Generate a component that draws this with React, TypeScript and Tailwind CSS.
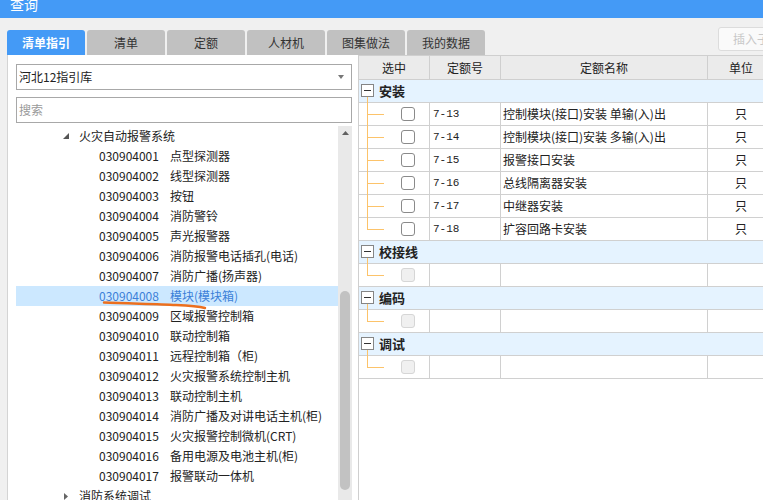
const tabs = ["清单指引", "清单", "定额", "人材机", "图集做法", "我的数据"];

const treeItems: [string, string][] = [
  ["030904001", "点型探测器"],
  ["030904002", "线型探测器"],
  ["030904003", "按钮"],
  ["030904004", "消防警铃"],
  ["030904005", "声光报警器"],
  ["030904006", "消防报警电话插孔(电话)"],
  ["030904007", "消防广播(扬声器)"],
  ["030904008", "模块(模块箱)"],
  ["030904009", "区域报警控制箱"],
  ["030904010", "联动控制箱"],
  ["030904011", "远程控制箱（柜)"],
  ["030904012", "火灾报警系统控制主机"],
  ["030904013", "联动控制主机"],
  ["030904014", "消防广播及对讲电话主机(柜)"],
  ["030904015", "火灾报警控制微机(CRT)"],
  ["030904016", "备用电源及电池主机(柜)"],
  ["030904017", "报警联动一体机"],
];

type Row = { code: string; name: string; unit: string };
const groups: { title: string; rows: (Row | null)[] }[] = [
  {
    title: "安装",
    rows: [
      { code: "7-13", name: "控制模块(接口)安装 单输(入)出", unit: "只" },
      { code: "7-14", name: "控制模块(接口)安装 多输(入)出", unit: "只" },
      { code: "7-15", name: "报警接口安装", unit: "只" },
      { code: "7-16", name: "总线隔离器安装", unit: "只" },
      { code: "7-17", name: "中继器安装", unit: "只" },
      { code: "7-18", name: "扩容回路卡安装", unit: "只" },
    ],
  },
  { title: "校接线", rows: [null] },
  { title: "编码", rows: [null] },
  { title: "调试", rows: [null] },
];

function GroupRow({ title }: { title: string }) {
  return (
    <div className="relative h-[23px] flex items-center bg-[#e5f3ff] border-b border-[#d0d0d0]">
      <div className="absolute left-[2px] top-[4px] w-[13px] h-[13px] border border-[#858585] bg-white flex items-center justify-center">
        <div className="w-[7px] h-[1px] bg-[#333]" />
      </div>
      <div className="absolute left-[8px] top-[17px] w-[1px] h-[6px] bg-[#fcc36a]" />
      <span className="ml-[20px] text-[13px] font-bold text-[#222]">{title}</span>
    </div>
  );
}

function DataRow({ row, last }: { row: Row | null; last: boolean }) {
  return (
    <div className="flex h-[23px] border-b border-[#d0d0d0]">
      <div className="relative w-[71px] shrink-0 border-r border-[#d0d0d0]">
        <div className={`absolute left-[8px] top-0 w-[1px] bg-[#fcc36a] ${last ? "h-[11px]" : "h-[23px]"}`} />
        <div className="absolute left-[8px] top-[11px] w-[17px] h-[1px] bg-[#fcc36a]" />
        <div
          className={`absolute left-[42px] top-[4px] w-[14px] h-[14px] rounded-[3px] border ${
            row ? "border-[#8a8a8a] bg-white" : "border-[#d6d6d6] bg-[#f0f0f0]"
          }`}
        />
      </div>
      <div className="w-[71px] shrink-0 border-r border-[#d0d0d0] pl-[3px] flex items-center text-[11px] font-['Liberation_Mono',monospace]">
        {row?.code}
      </div>
      <div className="w-[207px] shrink-0 border-r border-[#d0d0d0] pl-[2px] flex items-center">
        {row?.name}
      </div>
      <div className="w-[66px] shrink-0 flex items-center justify-center">{row?.unit}</div>
    </div>
  );
}

export default function App() {
  return (
    <div className="w-[763px] h-[500px] overflow-hidden bg-[#f0f0f0] font-['Noto_Sans_CJK_SC','Noto_Sans',sans-serif] text-[12px] text-[#222]">
      <div className="h-[18px] bg-[#449af6] overflow-hidden">
        <div className="pl-[10px] -mt-[6px] text-white text-[14px] leading-[20px]">查询</div>
      </div>

      <div className="h-[37px] flex items-end pl-[7px] overflow-hidden">
        {tabs.map((t, i) => (
          <div
            key={t}
            className={`w-[78px] h-[25px] mr-[2px] shrink-0 rounded-t-[3px] flex items-center justify-center ${
              i === 0 ? "bg-[#449af6] text-white font-bold" : "bg-[#c1c1c1] text-[#333]"
            }`}
          >
            {t}
          </div>
        ))}
        <div className="self-start mt-[9px] ml-[231px] w-[70px] h-[24px] shrink-0 rounded-[3px] border border-[#dcdcdc] bg-[#fafafa] pl-[14px] flex items-center whitespace-nowrap text-[#c8c8c8]">
          插入子目
        </div>
      </div>

      <div className="flex h-[445px]">
        {/* left: guide tree */}
        <div className="ml-[7px] w-[351px] shrink-0 bg-white border-l border-[#d4d4d4] pl-[8px] pr-[6px] pt-[9px] flex flex-col">
          <div className="h-[26px] border border-[#a8a8a8] flex items-center pl-[2px] pr-[7px]">
            <span className="flex-1">河北12指引库</span>
            <svg width="6" height="4" viewBox="0 0 6 4">
              <path d="M0 0H6L3 4Z" fill="#777" />
            </svg>
          </div>
          <div className="h-[26px] mt-[7px] border border-[#a8a8a8] flex items-center pl-[2px] text-[#9a9a9a]">
            搜索
          </div>
          <div className="mt-[3px] flex flex-1 min-h-0">
            <div className="flex-1 overflow-hidden">
              <div className="h-[20px] flex items-center">
                <svg className="ml-[47px] mr-[10px]" width="6" height="6" viewBox="0 0 6 6">
                  <path d="M6 0V6H0Z" fill="#555" />
                </svg>
                <span>火灾自动报警系统</span>
              </div>
              {treeItems.map(([code, name], i) => {
                const sel = i === 7;
                return (
                  <div
                    key={code}
                    className={`relative h-[20px] flex items-center pl-[83px] ${sel ? "bg-[#cce8ff] text-[#3b7fd8]" : ""}`}
                  >
                    <span className="w-[71px] shrink-0">{code}</span>
                    <span className="whitespace-nowrap">{name}</span>
                    {sel && (
                      <svg className="absolute left-0 top-0 overflow-visible" width="200" height="24">
                        <path
                          d="M88 16.5 C 110 17.5, 140 18, 160 19 S 185 21, 189 22"
                          fill="none"
                          stroke="#ec6f1e"
                          strokeWidth="2.4"
                          strokeLinecap="round"
                        />
                      </svg>
                    )}
                  </div>
                );
              })}
              <div className="h-[20px] flex items-center">
                <svg className="ml-[48px] mr-[11px]" width="4" height="7" viewBox="0 0 4 7">
                  <path d="M0 0L4 3.5L0 7Z" fill="#666" />
                </svg>
                <span>消防系统调试</span>
              </div>
            </div>
            <div className="w-[14px] shrink-0 bg-[#e9e9e9] flex flex-col items-center">
              <svg className="mt-[5px]" width="7" height="4" viewBox="0 0 7 4">
                <path d="M3.5 0L7 4H0Z" fill="#606060" />
              </svg>
              <div className="mt-[156px] w-[10px] h-[199px] rounded-full bg-[#c2c2c2]" />
            </div>
          </div>
        </div>

        {/* right: quota table */}
        <div className="flex-1 bg-white border-l border-t border-[#cfcfcf] overflow-hidden">
          <div className="w-[415px]">
            <div className="flex h-[24px] bg-[#ebebeb] border-b border-[#cfcfcf] text-[#222]">
              <div className="w-[71px] shrink-0 border-r border-[#cfcfcf] flex items-center justify-center">选中</div>
              <div className="w-[71px] shrink-0 border-r border-[#cfcfcf] flex items-center justify-center">定额号</div>
              <div className="w-[207px] shrink-0 border-r border-[#cfcfcf] flex items-center justify-center">定额名称</div>
              <div className="w-[66px] shrink-0 flex items-center justify-center">单位</div>
            </div>
            {groups.map((g) => (
              <div key={g.title}>
                <GroupRow title={g.title} />
                {g.rows.map((r, i) => (
                  <DataRow key={i} row={r} last={i === g.rows.length - 1} />
                ))}
              </div>
            ))}
          </div>
        </div>
      </div>
    </div>
  );
}
